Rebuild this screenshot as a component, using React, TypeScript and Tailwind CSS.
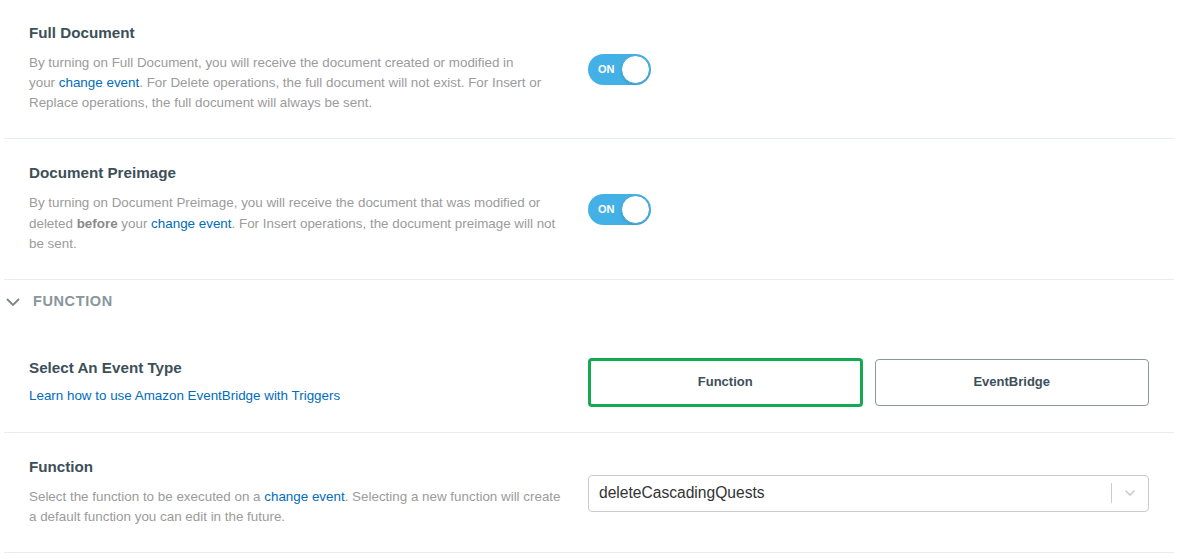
import React from "react";

const font = { fontFamily: '"Liberation Sans", Arial, sans-serif' };

function Toggle() {
  return (
    <div className="relative mt-[31px] flex h-[31px] w-[63px] items-center rounded-full bg-[#43b1e5]">
      <span className="pl-[10px] text-[11px] font-bold text-white">ON</span>
      <div className="absolute right-[1px] top-[1px] h-[29px] w-[29px] rounded-full border border-[#3aa2d6] bg-white shadow-[0_1px_2px_rgba(0,0,0,0.15)]" />
    </div>
  );
}

function Link({ children }: { children: React.ReactNode }) {
  return <span className="text-[#006cbc]">{children}</span>;
}

export default function App() {
  return (
    <div className="min-h-[559px] w-full bg-white" style={font}>
      <div className="mx-[4px] w-[1170px]">
        {/* Full Document */}
        <div className="flex border-b border-[#e7eeec] px-[25px] pb-[25px] pt-[23px]">
          <div className="w-[559px]">
            <div className="text-[15.2px] font-bold leading-[20px] text-[#3d4f58]">Full Document</div>
            <div className="mt-[10px] whitespace-nowrap text-[13.4px] leading-[20px] text-[#9b9b9b]">
              By turning on Full Document, you will receive the document created or modified in
              <br />
              your <Link>change event</Link>. For Delete operations, the full document will not exist. For Insert or
              <br />
              Replace operations, the full document will always be sent.
            </div>
          </div>
          <Toggle />
        </div>

        {/* Document Preimage */}
        <div className="flex border-b border-[#e7eeec] px-[25px] pb-[24px] pt-[24px]">
          <div className="w-[559px]">
            <div className="text-[15.2px] font-bold leading-[20px] text-[#3d4f58]">Document Preimage</div>
            <div className="mt-[10px] whitespace-nowrap text-[13.4px] leading-[20.5px] text-[#9b9b9b]">
              By turning on Document Preimage, you will receive the document that was modified or
              <br />
              deleted <span className="font-bold text-[#8a8a8a]">before</span> your <Link>change event</Link>. For Insert operations, the document preimage will not
              <br />
              be sent.
            </div>
          </div>
          <Toggle />
        </div>

        {/* Function header */}
        <div className="flex h-[44px] items-center pt-[1px]">
          <svg width="18" height="12" viewBox="0 0 18 12" className="mr-[11px]">
            <path d="M3 3 L9 9 L15 3" fill="none" stroke="#7a858b" strokeWidth="1.8" />
          </svg>
          <span className="text-[14.5px] font-bold tracking-[0.6px] text-[#89969c]">FUNCTION</span>
        </div>

        {/* Select An Event Type */}
        <div className="flex items-center border-b border-[#e7eeec] px-[25px] pb-[25px] pt-[34px]">
          <div className="w-[559px]">
            <div className="text-[15.2px] font-bold leading-[20px] text-[#3d4f58]">Select An Event Type</div>
            <div className="mt-[8px] text-[13.4px] leading-[20px] text-[#006cbc]">Learn how to use Amazon EventBridge with Triggers</div>
          </div>
          <div className="grid flex-1 grid-cols-2 items-center gap-[12px]">
            <button className="flex h-[49px] items-center justify-center rounded-[4px] border-[3px] border-[#13aa52] bg-white text-[13px] font-bold text-[#3d4f58]">
              Function
            </button>
            <button className="flex h-[47px] items-center justify-center rounded-[4px] border border-[#89979b] bg-white text-[13px] font-bold text-[#3d4f58]">
              EventBridge
            </button>
          </div>
        </div>

        {/* Function */}
        <div className="flex border-b border-[#e7eeec] px-[25px] pb-[25px] pt-[24px]">
          <div className="w-[559px]">
            <div className="text-[15.2px] font-bold leading-[20px] text-[#3d4f58]">Function</div>
            <div className="mt-[10px] whitespace-nowrap text-[13.4px] leading-[20px] text-[#9b9b9b]">
              Select the function to be executed on a <Link>change event</Link>. Selecting a new function will create
              <br />
              a default function you can edit in the future.
            </div>
          </div>
          <div className="mt-[18px] flex h-[37px] flex-1 items-center rounded-[4px] border border-[#cccccc] bg-white">
            <span className="flex-1 pl-[10px] text-[15.6px] text-[#333333]">deleteCascadingQuests</span>
            <div className="h-[20px] w-px bg-[#cccccc]" />
            <div className="flex w-[36px] items-center justify-center">
              <svg width="12" height="8" viewBox="0 0 12 8">
                <path d="M1.5 1.5 L6 6 L10.5 1.5" fill="none" stroke="#cccccc" strokeWidth="1.6" />
              </svg>
            </div>
          </div>
        </div>
      </div>
    </div>
  );
}
